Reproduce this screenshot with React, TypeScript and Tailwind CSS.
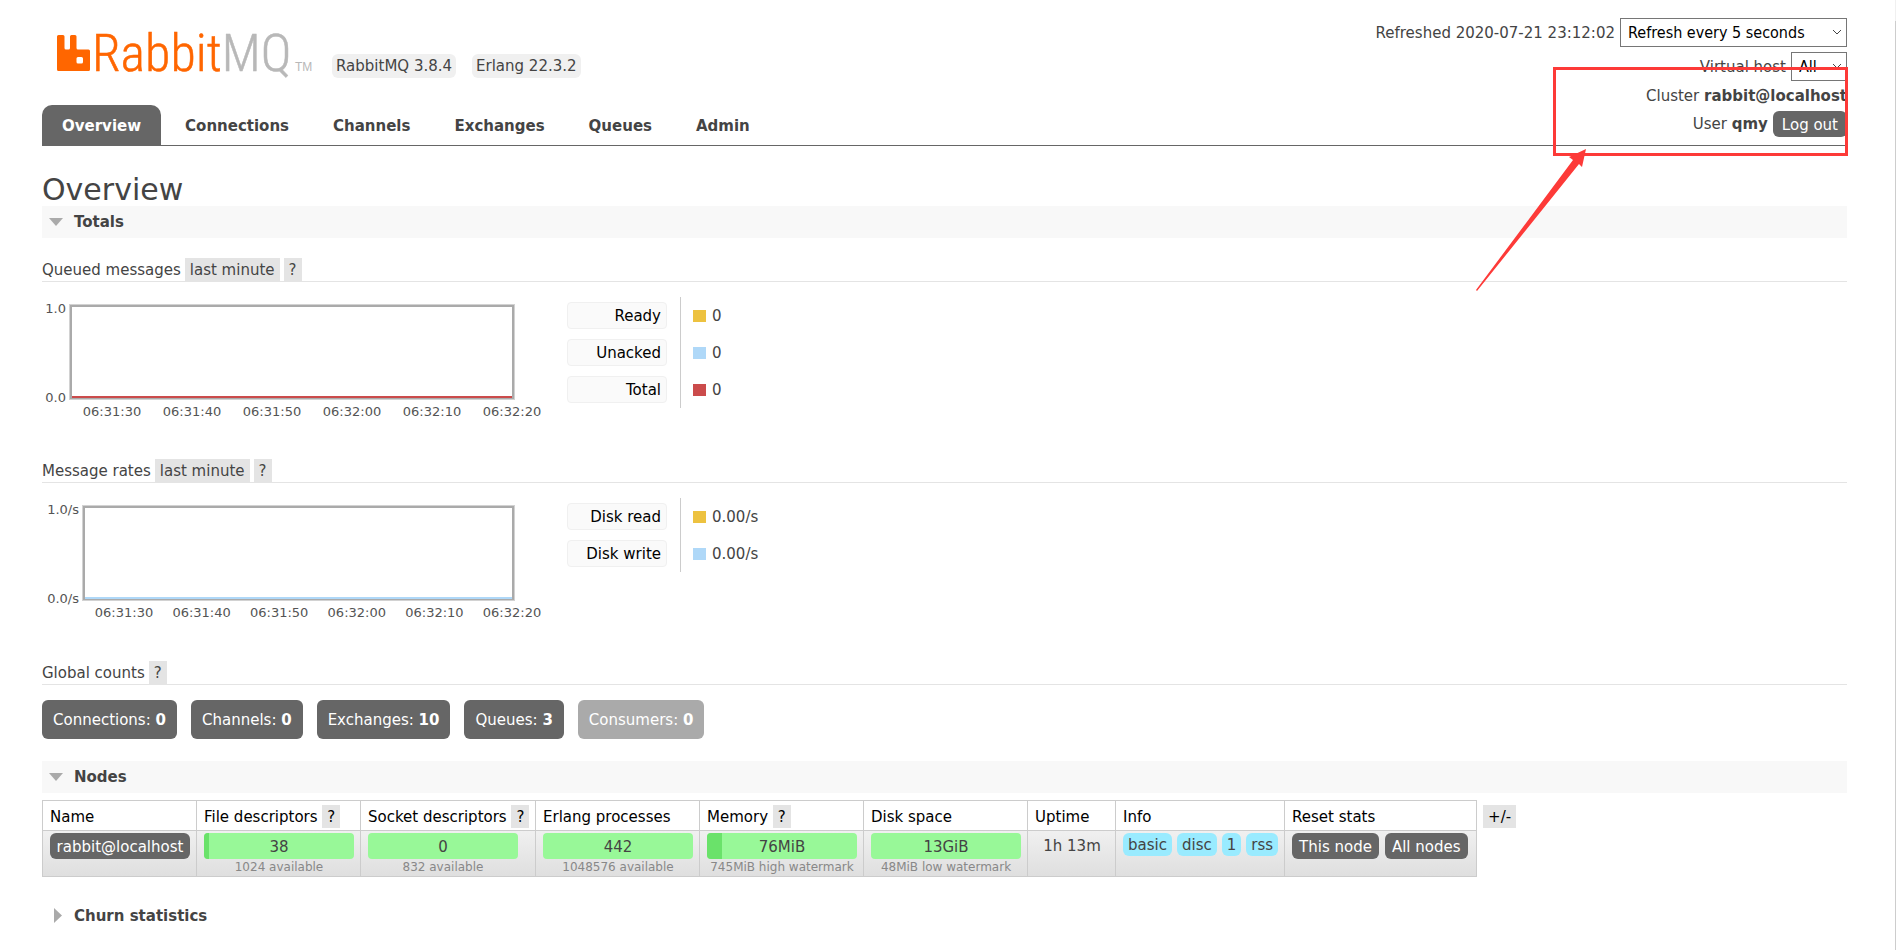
import type { ReactNode } from "react"
import clsx from "clsx"

const tabs = ["Overview", "Connections", "Channels", "Exchanges", "Queues", "Admin"]

const counts = [
  { label: "Connections", value: 0 },
  { label: "Channels", value: 0 },
  { label: "Exchanges", value: 10 },
  { label: "Queues", value: 3 },
  { label: "Consumers", value: 0, disabled: true },
]

const ticks = ["06:31:30", "06:31:40", "06:31:50", "06:32:00", "06:32:10", "06:32:20"]

const YELLOW = "#edc240"
const BLUE = "#afd8f8"
const RED = "#cb4b4b"

const Logo = () => (
  <a href="#/" className="flex items-center" aria-label="RabbitMQ">
    <svg width="268" height="54" viewBox="0 0 268 54" overflow="visible">
      <path
        fill="#ff6600"
        d="M1.500 9h4.500q1.500 0 1.500 1.500v11.500q0 1.500 1.500 1.500h2.500q1.500 0 1.500-1.500v-11.500q0-1.500 1.500-1.500h3.500q1.500 0 1.500 1.500v11.500q0 1.500 1.500 1.500h10.500q1.500 0 1.500 1.500v18.500q0 1.500-1.500 1.500h-30q-1.500 0-1.500-1.500v-33q0-1.500 1.500-1.500zM21 31q-1.500 0-1.500 1.500v3.500q0 1.500 1.500 1.500h3.500q1.500 0 1.500-1.500v-3.500q0-1.500-1.500-1.500z"
      />
      <text x="35" y="45" fontFamily="'Roboto Condensed', 'Open Sans Condensed', sans-serif" fontWeight="300" fontSize="52">
        <tspan fill="#ff6600" stroke="#ff6600" strokeWidth="0.500">Rabbit</tspan>
        <tspan fill="#b8b8b8" stroke="#b8b8b8" strokeWidth="0.500">MQ</tspan>
      </text>
      <text x="238" y="45" fill="#b8b8b8" fontFamily="'Liberation Sans', sans-serif" fontSize="12">
        TM
      </text>
    </svg>
  </a>
)

const Chevron = () => (
  <svg className="pointer-events-none absolute right-1 top-2 h-3 w-3" viewBox="0 0 12 12">
    <path d="M2 4l4 4 4-4" fill="none" stroke="#444" strokeWidth="1" />
  </svg>
)

type PickerProps = { id: string; label: string; options: string[]; width: string }

const Picker = ({ id, label, options, width }: PickerProps) => (
  <span className={clsx("relative inline-block", width)}>
    <select
      id={id}
      aria-label={label}
      className="block h-[29px] w-full appearance-none border border-[#767676] bg-white pl-[7px] pt-px font-['DejaVu_Sans_Condensed','DejaVu_Sans',sans-serif] text-base leading-none text-black"
    >
      {options.map((option) => (
        <option key={option}>{option}</option>
      ))}
    </select>
    <Chevron />
  </span>
)

const Help = ({ children = "?" }: { children?: ReactNode }) => (
  <button type="button" className="h-[23px] bg-[#e4e4e4] px-[5px] leading-[25px]">
    {children}
  </button>
)

const SectionTitle = ({ title, open = true }: { title: string; open?: boolean }) => (
  <h2 className={clsx("h-8 font-bold", open && "bg-[#f8f8f8]")}>
    <button type="button" className="flex h-full w-full items-center gap-[11px] pl-[7px] text-left">
      <svg width="14" height="16" viewBox="0 0 14 16" fill="#aaa">
        {open ? <path d="M0 4h14l-7 8z" /> : <path d="M5 0v15l8-7.500z" />}
      </svg>
      {title}
    </button>
  </h2>
)

const SubTitle = ({ title, range }: { title: string; range?: boolean }) => (
  <h3 className="flex h-6 gap-1 border-b border-[#e4e4e4] leading-[25px]">
    {title}
    {range && <Help>last minute</Help>}
    <Help />
  </h3>
)

type ChartProps = { unit?: string; color: string; left: number; first: number }

// frame and series share the same plot box, labels sit outside it
const Chart = ({ unit = "", color, left, first }: ChartProps) => {
  const step = (470 - first) / (ticks.length - 1)
  return (
    <svg width="510" height="125" className="font-['DejaVu_Sans',sans-serif] text-[13px]" fill="#545454">
      <text x={left - 4} y="15" textAnchor="end">
        1.0{unit}
      </text>
      <text x={left - 4} y="104" textAnchor="end">
        0.0{unit}
      </text>
      <rect x={left - 0.5} y="6.500" width={473 - left} height="95" fill="none" stroke="#d2d2d2" />
      <rect x={left + 1} y="8" width={470 - left} height="92" fill="none" stroke="#aaa" strokeWidth="2" />
      <path d={`M${left + 2} 99H470`} stroke={color} strokeWidth="2" />
      {ticks.map((tick, i) => (
        <text key={tick} x={first + step * i} y="118" textAnchor="middle">
          {tick}
        </text>
      ))}
    </svg>
  )
}

type LegendItem = { label: string; color: string; value: string }

const Legend = ({ items }: { items: LegendItem[] }) => (
  <table className="mt-[15px] border-collapse self-start">
    <tbody>
      {items.map(({ label, color, value }) => (
        <tr key={label} className="h-[37px]">
          <th className="border-r border-[#ccc] pr-[13px] font-normal">
            <button
              type="button"
              className="block h-[27px] w-[100px] rounded border border-[#f0f0f0] bg-[#fafafa] pr-[5px] text-right text-black"
            >
              {label}
            </button>
          </th>
          <td className="pl-3">
            <span className="flex items-center gap-1.5">
              <span className="h-3 w-[13px]" style={{ backgroundColor: color }} />
              {value}
            </span>
          </td>
        </tr>
      ))}
    </tbody>
  </table>
)

type StatBarProps = { value: string; note: string; used?: number }

const StatBar = ({ value, note, used = 0 }: StatBarProps) => (
  <div className="w-[150px] text-center">
    <div className="relative h-[26px] overflow-hidden rounded bg-[#98f898]">
      <div className="absolute inset-y-0 left-0 bg-[#6ae26a]" style={{ width: `${used}%` }} />
      <div className="relative leading-7">{value}</div>
    </div>
    <div className="whitespace-nowrap text-xs leading-4 text-[#888]">{note}</div>
  </div>
)

const darkButton = "h-[26px] rounded-md bg-[#666] leading-7 text-white"

const Nodes = () => (
  <div className="mt-[7px] flex items-start gap-1.5">
    <table className="border-collapse [&_td]:border-x [&_td]:border-[#ccc] [&_td]:pl-[7px] [&_td]:pr-1.5 [&_td]:pt-0.5 [&_td]:align-top [&_th]:border [&_th]:border-[#ccc] [&_th]:pl-[7px] [&_th]:pr-0 [&_th]:pt-0.5 [&_th]:text-left [&_th]:font-normal">
      <thead>
        <tr className="h-[30px] whitespace-nowrap text-black">
          <th className="w-[154px]">Name</th>
          <th className="w-[164px]">
            File descriptors <Help />
          </th>
          <th className="w-[175px]">
            Socket descriptors <Help />
          </th>
          <th className="w-[164px]">Erlang processes</th>
          <th className="w-[163px]">
            Memory <Help />
          </th>
          <th className="w-[164px]">Disk space</th>
          <th className="w-[88px]">Uptime</th>
          <th className="w-[166px]">Info</th>
          <th className="w-[192px]">Reset stats</th>
        </tr>
      </thead>
      <tbody>
        <tr className="h-[46px] border-b border-[#ccc] bg-linear-to-b from-[#f0f0f0] to-[#dfdfdf]">
          <td>
            <a href="#/nodes/rabbit" className={clsx(darkButton, "block px-1.5 text-center")}>
              rabbit@localhost
            </a>
          </td>
          <td>
            <StatBar value="38" note="1024 available" used={3} />
          </td>
          <td>
            <StatBar value="0" note="832 available" />
          </td>
          <td>
            <StatBar value="442" note="1048576 available" />
          </td>
          <td>
            <StatBar value="76MiB" note="745MiB high watermark" used={10} />
          </td>
          <td>
            <StatBar value="13GiB" note="48MiB low watermark" />
          </td>
          <td className="whitespace-nowrap text-center leading-[26px]">1h 13m</td>
          <td>
            <div className="flex gap-[5px]">
              {["basic", "disc", "1", "rss"].map((tag) => (
                <span key={tag} className="h-[23px] rounded-md bg-[#99ebff] px-[5px] leading-[25px]">
                  {tag}
                </span>
              ))}
            </div>
          </td>
          <td>
            <div className="flex gap-1.5 whitespace-nowrap">
              <button type="button" className={clsx(darkButton, "px-[7px]")}>
                This node
              </button>
              <button type="button" className={clsx(darkButton, "px-[7px]")}>
                All nodes
              </button>
            </div>
          </td>
        </tr>
      </tbody>
    </table>
    <div className="pt-[5px] text-black">
      <Help>+/-</Help>
    </div>
  </div>
)

const Header = () => (
  <header className="flex h-[146px] justify-between border-b border-[#666]">
    <div className="flex flex-col justify-between">
      <div className="flex items-start pl-[15px] pt-[26px]">
        <Logo />
        <span className="ml-[7px] mt-7 rounded-md bg-[#f0f0f0] px-1 leading-6">RabbitMQ 3.8.4</span>
        <span className="ml-4 mt-7 rounded-md bg-[#f0f0f0] px-1 leading-6">Erlang 22.3.2</span>
      </div>
      <nav className="flex gap-1 font-bold">
        {tabs.map((tab, i) => (
          <a
            key={tab}
            href={`#/${tab.toLowerCase()}`}
            className={clsx("h-10 rounded-t-[10px] px-5 leading-[42px]", i === 0 && "bg-[#666] text-white")}
          >
            {tab}
          </a>
        ))}
      </nav>
    </div>
    <div className="flex flex-col items-end pt-[18px]">
      <div className="flex items-center gap-[5px]">
        <span className="leading-[22px]">Refreshed 2020-07-21 23:12:02</span>
        <Picker id="refresh" label="Refresh" options={["Refresh every 5 seconds"]} width="w-[227px]" />
      </div>
      <div className="mt-[5px] flex items-center gap-[5px]">
        <label htmlFor="vhost">Virtual host</label>
        <Picker id="vhost" label="Virtual host" options={["All"]} width="w-14" />
      </div>
      <div className="leading-[30px]">
        Cluster <b>rabbit@localhost</b>
      </div>
      <div className="flex items-center gap-[5px]">
        <span>
          User <b>qmy</b>
        </span>
        <button type="button" className={clsx(darkButton, "px-[9px]")}>
          Log out
        </button>
      </div>
    </div>
  </header>
)

// red box round the account block with an arrow pointing at it
const Callout = () => (
  <svg className="pointer-events-none absolute right-12 top-[66px]" width="372" height="226">
    <rect x="78.500" y="2.500" width="292" height="86" fill="none" stroke="#fd3a38" strokeWidth="3" />
    <path fill="#fd3a38" d="M110 83l-17 8 4 3L0 224l1 1 102-127 3 3z" />
  </svg>
)

export default function App() {
  return (
    <div className="relative min-h-screen bg-white pl-[42px] pr-[49px] font-['DejaVu_Sans',sans-serif] text-[15px] leading-5 text-[#444]">
      <Header />
      <main className="pb-4">
        <h1 className="h-[60px] pt-6 text-[30px] leading-10">Overview</h1>
        <SectionTitle title="Totals" />

        <section className="pt-5">
          <SubTitle title="Queued messages" range />
          <div className="flex h-[177px] gap-[15px]">
            <div className="pt-4">
              <Chart color={RED} left={28} first={70} />
            </div>
            <Legend
              items={[
                { label: "Ready", color: YELLOW, value: "0" },
                { label: "Unacked", color: BLUE, value: "0" },
                { label: "Total", color: RED, value: "0" },
              ]}
            />
          </div>

          <SubTitle title="Message rates" range />
          <div className="flex h-[178px] gap-[15px]">
            <div className="pt-4">
              <Chart color={BLUE} unit="/s" left={41} first={82} />
            </div>
            <Legend
              items={[
                { label: "Disk read", color: YELLOW, value: "0.00/s" },
                { label: "Disk write", color: BLUE, value: "0.00/s" },
              ]}
            />
          </div>

          <SubTitle title="Global counts" />
          <div className="flex gap-3.5 pb-[22px] pt-[15px]">
            {counts.map(({ label, value, disabled }) => (
              <button
                key={label}
                type="button"
                disabled={disabled}
                className={clsx("h-[39px] rounded-md px-[11px] text-white", disabled ? "bg-[#aaa]" : "bg-[#666]")}
              >
                {label}: <b>{value}</b>
              </button>
            ))}
          </div>
        </section>

        <SectionTitle title="Nodes" />
        <Nodes />
        <div className="mt-[23px]">
          <SectionTitle title="Churn statistics" open={false} />
        </div>
      </main>

      <Callout />
      <div className="absolute bottom-0 right-0 top-0 w-px border-t-[21px] border-[#f0f0f0] bg-[#cdcdcd]" />
    </div>
  )
}
